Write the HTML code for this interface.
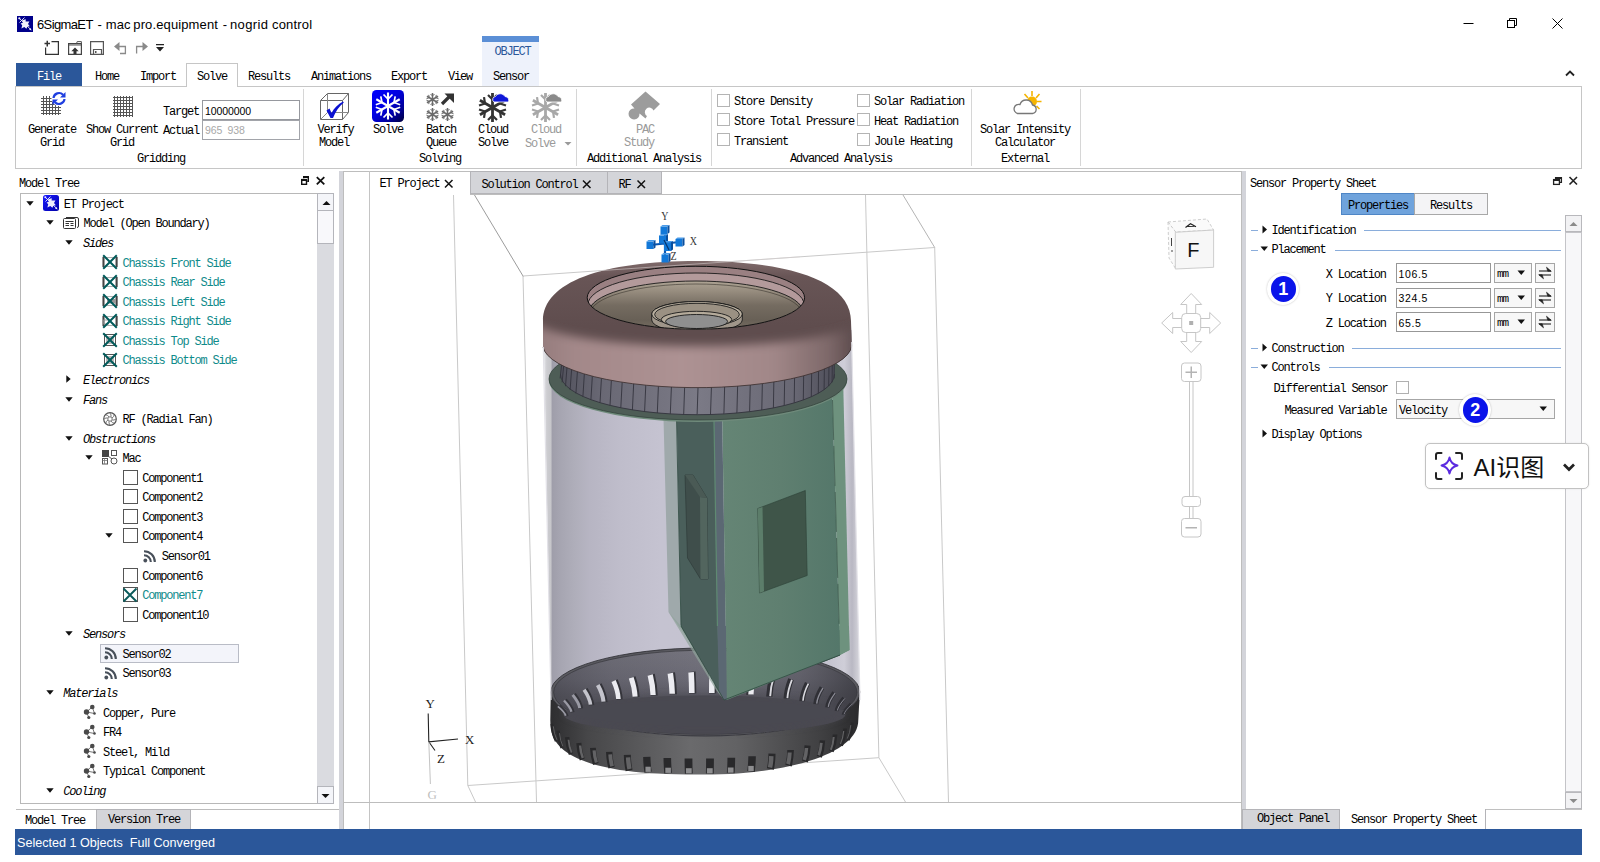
<!DOCTYPE html>
<html lang="en"><head><meta charset="utf-8"><title>6SigmaET - mac pro.equipment - nogrid control</title>
<style>
html,body{margin:0;padding:0;background:#fff;}
body{width:1600px;height:862px;overflow:hidden;position:relative;}
#app{position:absolute;left:0;top:0;width:1600px;height:862px;overflow:hidden;background:#fff;
 font-family:"Liberation Mono","Noto Sans CJK SC",monospace;font-size:12px;letter-spacing:-1.2px;color:#000;line-height:14px;white-space:nowrap;}
.a{position:absolute;}
.t{position:absolute;height:14px;line-height:14px;white-space:nowrap;margin-top:1.5px;}
.c{text-align:center;}
.r{text-align:right;}
.i{font-style:italic;}
.teal{color:#0f8b8b;}
.gr{color:#9a9a9a;}
.sans{font-family:"Liberation Sans","Noto Sans CJK SC",sans-serif;letter-spacing:0;margin-top:0;}
.box{position:absolute;box-sizing:border-box;}
svg{position:absolute;overflow:visible;}

</style></head>
<body>
<div id="app">
<!-- title bar -->
<svg class="a" style="left:17px;top:16px" width="16" height="16" viewBox="0 0 16 16"><rect width="16" height="16" fill="#00008b"/><path d="M5.200 4.300 L8.800 3.200 L8.600 5.600 L12.400 5.400 L11 8 L12.800 10.300 L10.400 10.600 L9.400 12.800 L7.300 10.900 L4.400 12.600 L5.200 9.200 L3.600 7.400 L5.800 6.800 Z" fill="#f2f2fa"/><path d="M2.500 2.500 L13.800 13.600" stroke="#f2f2fa" stroke-width="0.900"/><path d="M14.600 14.500 L12 13.600 L13.600 12 Z" fill="#f2f2fa"/><circle cx="2.300" cy="2.300" r="1.100" fill="#f2f2fa"/><path d="M2.500 6.500 L7.500 1.500" stroke="#f2f2fa" stroke-width="0.900"/></svg>
<div class="t sans" style="left:37px;top:15.700px;font-size:13px;height:18px;line-height:18px;letter-spacing:-0.620px;color:#000">6SigmaET</div>
<div class="t sans" style="left:97.600px;top:15.700px;font-size:13px;height:18px;line-height:18px;color:#000">-</div>
<div class="t sans" style="left:105.800px;top:15.700px;font-size:13px;height:18px;line-height:18px;letter-spacing:0.060px;color:#000">mac</div>
<div class="t sans" style="left:133.300px;top:15.700px;font-size:13px;height:18px;line-height:18px;letter-spacing:0.120px;color:#000">pro.equipment</div>
<div class="t sans" style="left:222.700px;top:15.700px;font-size:13px;height:18px;line-height:18px;color:#000">-</div>
<div class="t sans" style="left:230px;top:15.700px;font-size:13px;height:18px;line-height:18px;letter-spacing:0.350px;color:#000">nogrid</div>
<div class="t sans" style="left:272px;top:15.700px;font-size:13px;height:18px;line-height:18px;letter-spacing:0.180px;color:#000">control</div>
<!-- window buttons -->
<svg class="a" style="left:1455px;top:10px" width="130" height="28" viewBox="0 0 130 28"><g fill="none" stroke="#000" stroke-width="1"><path d="M8.5 13.5 H18.5"/><rect x="52.500" y="10.500" width="7" height="7"/><path d="M54.500 10.500 V8.500 H61.500 V15.500 H59.500"/><path d="M97.500 8.500 L107.500 18.500 M107.500 8.500 L97.500 18.500"/></g></svg>

<!-- quick access toolbar -->
<svg class="a" style="left:40px;top:38px" width="130" height="20" viewBox="0 0 130 20">
 <g fill="none" stroke="#333" stroke-width="1.200">
  <path d="M11.500 3.600 H18.400 V16.400 H5.600 V9.500"/><path d="M4.500 5.600 H10 M7.250 2.800 V8.400" stroke-width="1.500"/>
  <path d="M28.600 16.400 V5.600 H41.400 V16.400 Z" stroke="#444"/><path d="M28.600 7 H41.400 M36.500 5.600 L37.200 3.600 H41.400 V5.600" stroke="#555" stroke-width="1"/>
  <path d="M50.600 16.400 V3.600 H63.400 V16.400 Z M53.500 16.400 V11.500 H61.500 V16.400" stroke="#555"/>
 </g>
 <path d="M35 9.500 L38.700 13.200 H36.500 V16 H33.500 V13.200 H31.300 Z" fill="#333"/>
 <rect x="55" y="13" width="1.500" height="2" fill="#555"/>
 <g fill="none" stroke="#8a8a8a" stroke-width="1.300"><path d="M77 8.500 H85.400 V15.500 H80"/><path d="M96.600 15.500 V8.500 H104"/></g>
 <path d="M74 8.500 L79.500 4 V13 Z" fill="#8a8a8a"/><path d="M108 8.500 L102.500 4 V13 Z" fill="#8a8a8a"/>
 <path d="M116 6 H124 V7.300 H116 Z M116 9 H124 L120 13.500 Z" fill="#222"/>
</svg>
<!-- tabs -->
<div class="box" style="left:16px;top:63px;width:66px;height:23px;background:#2b579a"></div>
<div class="t" style="left:37px;top:68px;color:#fff">File</div>
<div class="box" style="left:482px;top:36px;width:57px;height:6px;background:#5b8fd6"></div>
<div class="box" style="left:482px;top:42px;width:57px;height:44px;background:#eef2fb"></div>
<div class="t" style="left:494.5px;top:43px;color:#2b579a">OBJECT</div>
<div class="t" style="left:95px;top:68px">Home</div>
<div class="t" style="left:140px;top:68px">Import</div>
<div class="t" style="left:248px;top:68px">Results</div>
<div class="t" style="left:311px;top:68px">Animations</div>
<div class="t" style="left:391px;top:68px">Export</div>
<div class="t" style="left:448px;top:68px">View</div>
<div class="t" style="left:493px;top:68px">Sensor</div>
<!-- ribbon body -->
<div class="box" style="left:15px;top:86px;width:1567px;height:83px;border:1px solid #c6c6c6;background:#fff"></div>
<div class="box" style="left:186px;top:63px;width:52px;height:24px;border:1px solid #c6c6c6;border-bottom:none;background:#fff"></div>
<div class="t" style="left:197px;top:68px">Solve</div>
<svg class="a" style="left:1564px;top:68px" width="12" height="10" viewBox="0 0 12 10"><path d="M2 7.500 L6 3.500 L10 7.500" fill="none" stroke="#222" stroke-width="1.800"/></svg>
<!-- separators -->
<div class="box" style="left:303px;top:89px;width:1px;height:77px;background:#d6d6d6"></div>
<div class="box" style="left:576px;top:89px;width:1px;height:77px;background:#d6d6d6"></div>
<div class="box" style="left:711px;top:89px;width:1px;height:77px;background:#d6d6d6"></div>
<div class="box" style="left:971px;top:89px;width:1px;height:77px;background:#d6d6d6"></div>
<div class="box" style="left:1080px;top:89px;width:1px;height:77px;background:#d6d6d6"></div>
<!-- group: Gridding -->
<svg class="a" style="left:40px;top:91px" width="28" height="26" viewBox="0 0 28 26">
 <g stroke="#555" stroke-width="1" fill="none"><path d="M1 7.500 H21 M1 10.500 H21 M1 13.500 H21 M1 16.500 H21 M1 19.500 H21 M1 22.500 H21 M3.500 5 V24 M6.500 5 V24 M9.500 5 V24 M12.500 5 V24 M15.500 5 V24 M18.500 5 V24"/></g>
 <circle cx="19" cy="7.500" r="7.500" fill="#fff"/>
 <g fill="none" stroke="#1f3fe0" stroke-width="2.200"><path d="M13.500 7 A5.500 5.500 0 0 1 23 3.800"/><path d="M24.500 8 A5.500 5.500 0 0 1 15 11.200"/></g>
 <path d="M25.500 1 V6.500 H20 Z M12.500 14 V8.500 H18 Z" fill="#1f3fe0"/>
</svg>
<div class="t c" style="left:22px;top:121px;width:60px">Generate</div>
<div class="t c" style="left:22px;top:134.5px;width:60px">Grid</div>
<svg class="a" style="left:112px;top:95px" width="22" height="22" viewBox="0 0 22 22"><g stroke="#555" stroke-width="1" fill="none"><path d="M1 2.500 H21 M1 5.500 H21 M1 8.500 H21 M1 11.500 H21 M1 14.500 H21 M1 17.500 H21 M1 20.500 H21 M2.500 1 V22 M5.500 1 V22 M8.500 1 V22 M11.500 1 V22 M14.500 1 V22 M17.500 1 V22 M20.500 1 V22"/></g></svg>
<div class="t c" style="left:82px;top:121px;width:80px">Show Current</div>
<div class="t c" style="left:82px;top:134.5px;width:80px">Grid</div>
<div class="t" style="left:163px;top:103px">Target</div>
<div class="t" style="left:163px;top:122.5px">Actual</div>
<div class="box" style="left:202px;top:100px;width:98px;height:20px;border:1px solid #96989e;background:#fff"></div>
<div class="box" style="left:202px;top:120px;width:98px;height:20px;border:1px solid #a2a4aa;background:#fff"></div>
<div class="t sans" style="left:205px;top:103.5px;font-size:10.500px;letter-spacing:-0.100px">10000000</div>
<div class="t sans" style="left:205px;top:123.3px;font-size:10.500px;letter-spacing:-0.100px;color:#a8a8a8;word-spacing:2.5px">965 938</div>
<div class="t c" style="left:121px;top:150.5px;width:80px">Gridding</div>
<!-- group: Solving -->
<svg class="a" style="left:318px;top:91px" width="32" height="30" viewBox="0 0 32 30">
 <g fill="none" stroke="#666" stroke-width="1"><path d="M2.500 9.500 H24.500 V28.500 H2.500 Z"/><path d="M2.500 9.500 L9.500 2.500 H30.500 L24.500 9.500 M30.500 2.500 V21.500 L24.500 28.500"/><path d="M9.500 2.500 V21.500 H30.500 M9.500 21.500 L2.500 28.500" stroke="#888"/></g>
 <path d="M8.500 19.500 L11.500 17.500 L13.500 22 C16 17 20 13.500 25 10.500 L25.800 11.500 C21 15.500 17.500 20.500 15 27 H12.500 Z" fill="#0a10d0"/>
</svg>
<div class="t c" style="left:305.5px;top:121px;width:60px">Verify</div>
<div class="t c" style="left:304px;top:134.5px;width:60px">Model</div>
<svg class="a" style="left:372px;top:90px" width="32" height="32" viewBox="0 0 32 32">
 <defs><linearGradient id="gsv" x1="0" y1="0" x2="1" y2="1"><stop offset="0" stop-color="#0000ff"/><stop offset="0.45" stop-color="#0000e0"/><stop offset="0.75" stop-color="#000098"/><stop offset="1" stop-color="#000038"/></linearGradient></defs>
 <rect x="0" y="0" width="32" height="32" rx="4.500" fill="url(#gsv)"/>
 <g stroke="#fff" stroke-width="2.100" fill="none" stroke-linecap="butt"><path d="M16 2.500 V29.500 M4.300 9.250 L27.700 22.750 M4.300 22.750 L27.700 9.250"/><path d="M11.500 4.500 L16 9 L20.500 4.500 M11.500 27.500 L16 23 L20.500 27.500 M3.800 14.800 L10 12.500 L8.800 6.300 M28.200 14.800 L22 12.500 L23.200 6.300 M3.800 17.200 L10 19.500 L8.800 25.700 M28.200 17.200 L22 19.500 L23.200 25.700" stroke-width="1.700"/></g>
</svg>
<div class="t c" style="left:358px;top:121px;width:60px">Solve</div>
<svg class="a" style="left:425px;top:92px" width="32" height="30" viewBox="0 0 32 30">
 <g stroke="#6a6a6a" stroke-width="1.500" fill="none"><path d="M7.500 1 V14 M1.900 4.250 L13.100 10.750 M1.900 10.750 L13.100 4.250"/><path d="M5.500 2 L7.500 4 L9.500 2 M5.500 13 L7.500 11 L9.500 13 M1.500 6.700 L4.300 5.700 L3.700 2.900 M13.500 6.700 L10.700 5.700 L11.300 2.900 M1.500 8.300 L4.300 9.300 L3.700 12.100 M13.500 8.300 L10.700 9.300 L11.300 12.100" stroke-width="1"/></g>
 <g transform="translate(0,15)"><g stroke="#6a6a6a" stroke-width="1.500" fill="none"><path d="M7.500 1 V14 M1.900 4.250 L13.100 10.750 M1.900 10.750 L13.100 4.250"/><path d="M5.500 2 L7.500 4 L9.500 2 M5.500 13 L7.500 11 L9.500 13 M1.500 6.700 L4.300 5.700 L3.700 2.900 M13.500 6.700 L10.700 5.700 L11.300 2.900 M1.500 8.300 L4.300 9.300 L3.700 12.100 M13.500 8.300 L10.700 9.300 L11.300 12.100" stroke-width="1"/></g></g><g transform="translate(15,15)"><g stroke="#6a6a6a" stroke-width="1.500" fill="none"><path d="M7.500 1 V14 M1.900 4.250 L13.100 10.750 M1.900 10.750 L13.100 4.250"/><path d="M5.500 2 L7.500 4 L9.500 2 M5.500 13 L7.500 11 L9.500 13 M1.500 6.700 L4.300 5.700 L3.700 2.900 M13.500 6.700 L10.700 5.700 L11.300 2.900 M1.500 8.300 L4.300 9.300 L3.700 12.100 M13.500 8.300 L10.700 9.300 L11.300 12.100" stroke-width="1"/></g></g>
 <path d="M17 12 L25.500 3.500" stroke="#333" stroke-width="3.200" fill="none"/><path d="M19.500 1.500 H29 V11 Z" fill="#333"/>
</svg>
<div class="t c" style="left:411px;top:121px;width:60px">Batch</div>
<div class="t c" style="left:411px;top:134.5px;width:60px">Queue</div>
<svg class="a" style="left:477px;top:90px" width="34" height="34" viewBox="0 0 34 34">
 <g id="sfb" stroke="#333" stroke-width="2.800" fill="none"><path d="M15.500 3 V32 M2.900 10.250 L28.100 24.750 M2.900 24.750 L28.100 10.250"/><path d="M11 5 L15.500 9.500 L20 5 M11 30 L15.500 25.500 L20 30 M2 15.500 L8 13.500 L7 7.200 M29 15.500 L23 13.500 L24 7.200 M2 19.500 L8 21.500 L7 27.800 M29 19.500 L23 21.500 L24 27.800" stroke-width="2.200"/></g>
 <path d="M17 12 H31.500 A4 4 0 0 0 28 6.500 A5.500 5.500 0 0 0 18.500 6.500 A3 3 0 0 0 17 12 Z" fill="#1018d8" stroke="#fff" stroke-width="0.800"/>
</svg>
<div class="t c" style="left:463px;top:121px;width:60px">Cloud</div>
<div class="t c" style="left:463px;top:134.5px;width:60px">Solve</div>
<svg class="a" style="left:530px;top:90px" width="34" height="34" viewBox="0 0 34 34">
 <g stroke="#a8a8a8" stroke-width="2.800" fill="none"><path d="M15.500 3 V32 M2.900 10.250 L28.100 24.750 M2.900 24.750 L28.100 10.250"/><path d="M11 5 L15.500 9.500 L20 5 M11 30 L15.500 25.500 L20 30 M2 15.500 L8 13.500 L7 7.200 M29 15.500 L23 13.500 L24 7.200 M2 19.500 L8 21.500 L7 27.800 M29 19.500 L23 21.500 L24 27.800" stroke-width="2.200"/></g>
 <path d="M17 12 H31.500 A4 4 0 0 0 28 6.500 A5.500 5.500 0 0 0 18.500 6.500 A3 3 0 0 0 17 12 Z" fill="#8a8a8a" stroke="#fff" stroke-width="0.800"/>
</svg>
<div class="t c gr" style="left:516px;top:121px;width:60px">Cloud</div>
<div class="t gr" style="left:525px;top:135px">Solve</div>
<svg class="a" style="left:564px;top:141px" width="8" height="6" viewBox="0 0 8 6"><path d="M0.500 1 H7.500 L4 4.500 Z" fill="#9a9a9a"/></svg>
<div class="t c" style="left:400px;top:150.5px;width:80px">Solving</div>
<!-- group: Additional Analysis -->
<svg class="a" style="left:628px;top:90px" width="34" height="32" viewBox="0 0 34 32">
 <path d="M17.500 1.500 L32 14 L25.500 20.500 A4.500 4.500 0 1 0 19 26 L17.500 28.500 L11.500 23.500 A5.500 5.500 0 1 1 6.500 18.500 L3 14.500 Z" fill="#9c9c9c"/>
</svg>
<div class="t c gr" style="left:615px;top:121px;width:60px">PAC</div>
<div class="t c gr" style="left:609px;top:134.5px;width:60px">Study</div>
<div class="t c" style="left:584px;top:150.5px;width:120px">Additional Analysis</div>
<!-- group: Advanced Analysis -->
<div class="box" style="left:717px;top:94px;width:13px;height:13px;border:1px solid #b4b4b4;background:#fff"></div>
<div class="box" style="left:717px;top:113px;width:13px;height:13px;border:1px solid #b4b4b4;background:#fff"></div>
<div class="box" style="left:717px;top:133px;width:13px;height:13px;border:1px solid #b4b4b4;background:#fff"></div>
<div class="box" style="left:857px;top:94px;width:13px;height:13px;border:1px solid #b4b4b4;background:#fff"></div>
<div class="box" style="left:857px;top:113px;width:13px;height:13px;border:1px solid #b4b4b4;background:#fff"></div>
<div class="box" style="left:857px;top:133px;width:13px;height:13px;border:1px solid #b4b4b4;background:#fff"></div>
<div class="t" style="left:734px;top:93.5px">Store Density</div>
<div class="t" style="left:734px;top:113px">Store Total Pressure</div>
<div class="t" style="left:734px;top:133px">Transient</div>
<div class="t" style="left:874px;top:93.5px">Solar Radiation</div>
<div class="t" style="left:874px;top:113px">Heat Radiation</div>
<div class="t" style="left:874px;top:133px">Joule Heating</div>
<div class="t c" style="left:781px;top:150.5px;width:120px">Advanced Analysis</div>
<!-- group: External -->
<svg class="a" style="left:1010px;top:90px" width="34" height="26" viewBox="0 0 34 26">
 <g stroke="#f5b400" stroke-width="1.600"><path d="M22 1 V6 M14.500 4 L18 8 M29.500 4 L26 8 M31.500 11.500 H27 M29.500 19 L26.500 16"/></g>
 <circle cx="22" cy="11.500" r="5" fill="#f5b400"/>
 <path d="M7.500 23.500 H22.500 A4.300 4.300 0 0 0 22.500 15 A6.500 6.500 0 0 0 10 14.500 A4.600 4.600 0 0 0 7.500 23.500 Z" fill="#fff" stroke="#777" stroke-width="1.300"/>
</svg>
<div class="t c" style="left:965px;top:121px;width:120px">Solar Intensity</div>
<div class="t c" style="left:965px;top:134.5px;width:120px">Calculator</div>
<div class="t c" style="left:985px;top:150.5px;width:80px">External</div>

<!-- model tree panel -->
<div class="t" style="left:19px;top:175px">Model Tree</div>
<svg class="a" style="left:299px;top:175px" width="30" height="12" viewBox="0 0 30 12"><g fill="none" stroke="#111" stroke-width="1.400"><path d="M4.700 3.300 V1.700 H9.300 V6.300 H8.200" /><path d="M4.700 2 H9.300" stroke-width="2"/><rect x="2.700" y="4.600" width="4.800" height="4.700" fill="#fff"/><path d="M2.700 5 H7.500" stroke-width="2"/><path d="M17.800 2.200 L25.300 9.300 M25.300 2.200 L17.800 9.300" stroke-width="1.800"/></g></svg>
<div class="box" style="left:20px;top:193px;width:314px;height:611px;border:1px solid #b8b8b8;background:#fff"></div>
<div class="box" style="left:317px;top:193px;width:17px;height:610px;background:#dadbe0"></div>
<div class="box" style="left:317px;top:193px;width:17px;height:18px;border:1px solid #b4b5bb;background:#f4f5f9"></div>
<div class="box" style="left:317px;top:210px;width:17px;height:34px;border:1px solid #b4b5bb;background:#f8f8fb"></div>
<div class="box" style="left:317px;top:786px;width:17px;height:18px;border:1px solid #b4b5bb;background:#f4f5f9"></div>
<svg class="a" style="left:321.5px;top:199.5px" width="9" height="6" viewBox="0 0 9 6"><path d="M0.500 5 H8.500 L4.500 1 Z" fill="#111"/></svg>
<svg class="a" style="left:321px;top:793px" width="9" height="6" viewBox="0 0 9 6"><path d="M0.500 1 H8.500 L4.500 5 Z" fill="#111"/></svg>
<svg class="a" style="left:26.2px;top:200.80px" width="8" height="5" viewBox="0 0 8 5"><path d="M0.300 0.300 H7.700 L4 4.700 Z" fill="#111"/></svg>
<svg class="a" style="left:43.2px;top:195.30px" width="16" height="16" viewBox="0 0 16 16"><defs><linearGradient id="gapp" x1="0" y1="0" x2="1" y2="1"><stop offset="0" stop-color="#1a1aff"/><stop offset="1" stop-color="#0000a8"/></linearGradient></defs><rect width="16" height="16" rx="2.500" fill="url(#gapp)"/><path d="M5.200 4.300 L8.800 3.200 L8.600 5.600 L12.400 5.400 L11 8 L12.800 10.300 L10.400 10.600 L9.400 12.800 L7.300 10.900 L4.400 12.600 L5.200 9.200 L3.600 7.400 L5.800 6.800 Z" fill="#eeeefc"/><path d="M2.500 2.500 L13.800 13.600" stroke="#eeeefc" stroke-width="0.900"/><path d="M14.600 14.500 L12 13.600 L13.600 12 Z" fill="#eeeefc"/><circle cx="2.300" cy="2.300" r="1" fill="#eeeefc"/><path d="M2.500 6.500 L7.500 1.500" stroke="#eeeefc" stroke-width="0.900"/></svg>
<div class="t " style="left:63.8px;top:196.30px">ET Project</div>
<svg class="a" style="left:45.8px;top:220.37px" width="8" height="5" viewBox="0 0 8 5"><path d="M0.300 0.300 H7.700 L4 4.700 Z" fill="#111"/></svg>
<svg class="a" style="left:63.0px;top:214.87px" width="17" height="16" viewBox="0 0 17 16"><g fill="none" stroke="#333" stroke-width="1"><rect x="0.500" y="3.500" width="12" height="10" rx="1"/><path d="M3 2.500 H14 Q15.500 2.500 15.500 4 V11 Q15.500 12.500 14 12.500" /><path d="M2.500 6.500 H10.500 M2.500 8.500 H6 M7.500 8.500 H10.500 M2.500 10.500 H6 M7.500 10.500 H10.500"/></g></svg>
<div class="t " style="left:83.4px;top:215.87px">Model (Open Boundary)</div>
<svg class="a" style="left:65.4px;top:239.94px" width="8" height="5" viewBox="0 0 8 5"><path d="M0.300 0.300 H7.700 L4 4.700 Z" fill="#111"/></svg>
<div class="t i" style="left:82.9px;top:235.44px">Sides</div>
<svg class="a" style="left:102.1px;top:254.01px" width="17" height="16" viewBox="0 0 17 16"><path d="M2.500 3.500 H13.500 V12.500 H2.500 Z" fill="#fff" stroke="#999" stroke-width="0.800"/><path d="M1.300 3 V13 M14.800 3 V13" stroke="#444" stroke-width="1.700"/><path d="M1.200 1.200 L14.800 14.800 M14.800 1.200 L1.200 14.800" stroke="#005a5a" stroke-width="2"/></svg>
<div class="t teal" style="left:122.6px;top:255.01px">Chassis Front Side</div>
<svg class="a" style="left:102.1px;top:273.58px" width="17" height="16" viewBox="0 0 17 16"><path d="M2.500 3.500 H13.500 V12.500 H2.500 Z" fill="#fff" stroke="#999" stroke-width="0.800"/><path d="M1.300 3 V13 M14.800 3 V13" stroke="#444" stroke-width="1.700"/><path d="M1.200 1.200 L14.800 14.800 M14.800 1.200 L1.200 14.800" stroke="#005a5a" stroke-width="2"/></svg>
<div class="t teal" style="left:122.6px;top:274.58px">Chassis Rear Side</div>
<svg class="a" style="left:102.1px;top:293.15px" width="17" height="16" viewBox="0 0 17 16"><path d="M2.500 3.500 H13.500 V12.500 H2.500 Z" fill="#fff" stroke="#999" stroke-width="0.800"/><path d="M1.300 3 V13 M14.800 3 V13" stroke="#444" stroke-width="1.700"/><rect x="5" y="6" width="9" height="4.500" fill="#9a9a9a"/><path d="M1.200 1.200 L14.800 14.800 M14.800 1.200 L1.200 14.800" stroke="#005a5a" stroke-width="2"/></svg>
<div class="t teal" style="left:122.6px;top:294.15px">Chassis Left Side</div>
<svg class="a" style="left:102.1px;top:312.72px" width="17" height="16" viewBox="0 0 17 16"><path d="M2.500 3.500 H13.500 V12.500 H2.500 Z" fill="#fff" stroke="#999" stroke-width="0.800"/><path d="M1.300 3 V13 M14.800 3 V13" stroke="#444" stroke-width="1.700"/><rect x="1.500" y="7" width="5" height="4" fill="none" stroke="#888" stroke-width="0.800"/><path d="M1.200 1.200 L14.800 14.800 M14.800 1.200 L1.200 14.800" stroke="#005a5a" stroke-width="2"/></svg>
<div class="t teal" style="left:122.6px;top:313.72px">Chassis Right Side</div>
<svg class="a" style="left:102.1px;top:332.29px" width="17" height="16" viewBox="0 0 17 16"><path d="M2.500 2.500 H13.500 V13.500 H2.500 Z" fill="#fff" stroke="#555" stroke-width="1"/><rect x="4" y="4" width="8" height="8" fill="#b8b8b8"/><path d="M1.200 1.200 L14.800 14.800 M14.800 1.200 L1.200 14.800" stroke="#005a5a" stroke-width="2"/></svg>
<div class="t teal" style="left:122.6px;top:333.29px">Chassis Top Side</div>
<svg class="a" style="left:102.1px;top:351.86px" width="17" height="16" viewBox="0 0 17 16"><path d="M2.500 2.500 H13.500 V13.500 H2.500 Z" fill="#fff" stroke="#555" stroke-width="1"/><rect x="4" y="4" width="8" height="8" fill="#b8b8b8"/><path d="M1.200 1.200 L14.800 14.800 M14.800 1.200 L1.200 14.800" stroke="#005a5a" stroke-width="2"/></svg>
<div class="t teal" style="left:122.6px;top:352.86px">Chassis Bottom Side</div>
<svg class="a" style="left:66.4px;top:375.43px" width="5" height="8" viewBox="0 0 5 8"><path d="M0.300 0.300 V7.700 L4.700 4 Z" fill="#111"/></svg>
<div class="t i" style="left:82.9px;top:372.43px">Electronics</div>
<svg class="a" style="left:65.4px;top:396.50px" width="8" height="5" viewBox="0 0 8 5"><path d="M0.300 0.300 H7.700 L4 4.700 Z" fill="#111"/></svg>
<div class="t i" style="left:82.9px;top:392.00px">Fans</div>
<svg class="a" style="left:101.6px;top:410.57px" width="16" height="16" viewBox="0 0 16 16"><circle cx="8" cy="8" r="6.300" fill="none" stroke="#555" stroke-width="1.200"/><circle cx="8" cy="8" r="2.200" fill="none" stroke="#777" stroke-width="1"/><g stroke="#777" stroke-width="1" fill="none"><path d="M8 2 Q9.500 4 9 5.800 M14 8 Q12 9.500 10.200 9 M8 14 Q6.500 12 7 10.200 M2 8 Q4 6.500 5.800 7 M12.200 3.800 Q12 6 10 7 M12.200 12.200 Q10 12 9 10 M3.800 12.200 Q4 10 6 9 M3.800 3.800 Q6 4 7 6"/></g></svg>
<div class="t " style="left:122.6px;top:411.57px">RF (Radial Fan)</div>
<svg class="a" style="left:65.4px;top:435.64px" width="8" height="5" viewBox="0 0 8 5"><path d="M0.300 0.300 H7.700 L4 4.700 Z" fill="#111"/></svg>
<div class="t i" style="left:82.9px;top:431.14px">Obstructions</div>
<svg class="a" style="left:85.0px;top:455.21px" width="8" height="5" viewBox="0 0 8 5"><path d="M0.300 0.300 H7.700 L4 4.700 Z" fill="#111"/></svg>
<svg class="a" style="left:101.3px;top:448.71px" width="17" height="16" viewBox="0 0 17 16"><rect x="1" y="1" width="7" height="7" fill="#444"/><rect x="10.500" y="1.500" width="5" height="5" fill="#fff" stroke="#555"/><rect x="1.500" y="9.500" width="5" height="5.500" fill="#fff" stroke="#555"/><path d="M3.500 9.500 V15 M1.500 11.500 H6.500" stroke="#777" stroke-width="0.800"/><circle cx="13" cy="12" r="3" fill="#fff" stroke="#555"/><path d="M7 7 L11 10" stroke="#555"/></svg>
<div class="t " style="left:122.6px;top:450.71px">Mac</div>
<div class="box" style="left:122.9px;top:469.78px;width:15px;height:15px;border:1px solid #555;background:#fff"></div>
<div class="t " style="left:142.2px;top:470.28px">Component1</div>
<div class="box" style="left:122.9px;top:489.35px;width:15px;height:15px;border:1px solid #555;background:#fff"></div>
<div class="t " style="left:142.2px;top:489.85px">Component2</div>
<div class="box" style="left:122.9px;top:508.92px;width:15px;height:15px;border:1px solid #555;background:#fff"></div>
<div class="t " style="left:142.2px;top:509.42px">Component3</div>
<svg class="a" style="left:104.60000000000001px;top:533.49px" width="8" height="5" viewBox="0 0 8 5"><path d="M0.300 0.300 H7.700 L4 4.700 Z" fill="#111"/></svg>
<div class="box" style="left:122.9px;top:528.49px;width:15px;height:15px;border:1px solid #555;background:#fff"></div>
<div class="t " style="left:142.2px;top:528.99px">Component4</div>
<svg class="a" style="left:142.2px;top:547.56px" width="16" height="16" viewBox="0 0 16 16"><circle cx="3.300" cy="12.500" r="1.900" fill="#48505a"/><g fill="none" stroke="#48505a" stroke-width="2.100"><path d="M2 7.200 A6.800 6.800 0 0 1 8.800 14"/><path d="M2 3.200 A10.800 10.800 0 0 1 12.800 14"/></g></svg>
<div class="t " style="left:161.8px;top:548.56px">Sensor01</div>
<div class="box" style="left:122.9px;top:567.63px;width:15px;height:15px;border:1px solid #555;background:#fff"></div>
<div class="t " style="left:142.2px;top:568.13px">Component6</div>
<div class="box" style="left:122.9px;top:587.20px;width:15px;height:15px;border:1px solid #555;background:#fff"></div><svg class="a" style="left:122.4px;top:586.70px" width="16" height="16" viewBox="0 0 16 16"><path d="M1.500 1.500 L14.500 14.500 M14.500 1.500 L1.500 14.500" stroke="#0b5a5a" stroke-width="1.900"/></svg>
<div class="t teal" style="left:142.2px;top:587.70px">Component7</div>
<div class="box" style="left:122.9px;top:606.77px;width:15px;height:15px;border:1px solid #555;background:#fff"></div>
<div class="t " style="left:142.2px;top:607.27px">Component10</div>
<svg class="a" style="left:65.4px;top:631.34px" width="8" height="5" viewBox="0 0 8 5"><path d="M0.300 0.300 H7.700 L4 4.700 Z" fill="#111"/></svg>
<div class="t i" style="left:82.9px;top:626.84px">Sensors</div>
<div class="box" style="left:99.6px;top:643.91px;width:139px;height:19px;border:1px solid #b9bcc6;background:#f3f4fa"></div>
<svg class="a" style="left:102.6px;top:645.41px" width="16" height="16" viewBox="0 0 16 16"><circle cx="3.300" cy="12.500" r="1.900" fill="#48505a"/><g fill="none" stroke="#48505a" stroke-width="2.100"><path d="M2 7.200 A6.800 6.800 0 0 1 8.800 14"/><path d="M2 3.200 A10.800 10.800 0 0 1 12.800 14"/></g></svg>
<div class="t " style="left:122.6px;top:646.41px">Sensor02</div>
<svg class="a" style="left:102.6px;top:664.98px" width="16" height="16" viewBox="0 0 16 16"><circle cx="3.300" cy="12.500" r="1.900" fill="#48505a"/><g fill="none" stroke="#48505a" stroke-width="2.100"><path d="M2 7.200 A6.800 6.800 0 0 1 8.800 14"/><path d="M2 3.200 A10.800 10.800 0 0 1 12.800 14"/></g></svg>
<div class="t " style="left:122.6px;top:665.98px">Sensor03</div>
<svg class="a" style="left:45.8px;top:690.05px" width="8" height="5" viewBox="0 0 8 5"><path d="M0.300 0.300 H7.700 L4 4.700 Z" fill="#111"/></svg>
<div class="t i" style="left:63.3px;top:685.55px">Materials</div>
<svg class="a" style="left:82.7px;top:704.12px" width="16" height="16" viewBox="0 0 16 16"><g stroke="#777" stroke-width="1"><path d="M3.500 8 L9.300 3 M3.500 8 L11.500 9.500 M3.500 8 L5.800 13.500 M9.300 3 L11.500 9.500"/></g><circle cx="3.500" cy="8" r="2.700" fill="#4a4a4a"/><circle cx="9.300" cy="3" r="2.300" fill="#4a4a4a"/><circle cx="11.500" cy="9.500" r="1.300" fill="#4a4a4a"/><circle cx="5.800" cy="13.500" r="1.600" fill="#4a4a4a"/></svg>
<div class="t " style="left:103.0px;top:705.12px">Copper, Pure</div>
<svg class="a" style="left:82.7px;top:723.69px" width="16" height="16" viewBox="0 0 16 16"><g stroke="#777" stroke-width="1"><path d="M3.500 8 L9.300 3 M3.500 8 L11.500 9.500 M3.500 8 L5.800 13.500 M9.300 3 L11.500 9.500"/></g><circle cx="3.500" cy="8" r="2.700" fill="#4a4a4a"/><circle cx="9.300" cy="3" r="2.300" fill="#4a4a4a"/><circle cx="11.500" cy="9.500" r="1.300" fill="#4a4a4a"/><circle cx="5.800" cy="13.500" r="1.600" fill="#4a4a4a"/></svg>
<div class="t " style="left:103.0px;top:724.69px">FR4</div>
<svg class="a" style="left:82.7px;top:743.26px" width="16" height="16" viewBox="0 0 16 16"><g stroke="#777" stroke-width="1"><path d="M3.500 8 L9.300 3 M3.500 8 L11.500 9.500 M3.500 8 L5.800 13.500 M9.300 3 L11.500 9.500"/></g><circle cx="3.500" cy="8" r="2.700" fill="#4a4a4a"/><circle cx="9.300" cy="3" r="2.300" fill="#4a4a4a"/><circle cx="11.500" cy="9.500" r="1.300" fill="#4a4a4a"/><circle cx="5.800" cy="13.500" r="1.600" fill="#4a4a4a"/></svg>
<div class="t " style="left:103.0px;top:744.26px">Steel, Mild</div>
<svg class="a" style="left:82.7px;top:762.83px" width="16" height="16" viewBox="0 0 16 16"><g stroke="#777" stroke-width="1"><path d="M3.500 8 L9.300 3 M3.500 8 L11.500 9.500 M3.500 8 L5.800 13.500 M9.300 3 L11.500 9.500"/></g><circle cx="3.500" cy="8" r="2.700" fill="#4a4a4a"/><circle cx="9.300" cy="3" r="2.300" fill="#4a4a4a"/><circle cx="11.500" cy="9.500" r="1.300" fill="#4a4a4a"/><circle cx="5.800" cy="13.500" r="1.600" fill="#4a4a4a"/></svg>
<div class="t " style="left:103.0px;top:763.83px">Typical Component</div>
<svg class="a" style="left:45.8px;top:787.90px" width="8" height="5" viewBox="0 0 8 5"><path d="M0.300 0.300 H7.700 L4 4.700 Z" fill="#111"/></svg>
<div class="t i" style="left:63.3px;top:783.40px">Cooling</div>
<div class="box" style="left:16px;top:809px;width:323px;height:1px;background:#bcbcbc"></div>
<div class="box" style="left:96px;top:809px;width:95px;height:20px;border:1px solid #b4b4b8;border-bottom:none;background:#d4d5d9"></div>
<div class="box" style="left:16px;top:810px;width:80px;height:19px;background:#fff"></div>
<div class="t" style="left:25px;top:812px">Model Tree</div>
<div class="t" style="left:108px;top:811px">Version Tree</div>
<div class="box" style="left:339px;top:171px;width:4.3px;height:658px;background:#d3d4da"></div>

<!-- document area -->
<div class="box" style="left:343px;top:171px;width:899px;height:658px;border:1px solid #bdbdbd;border-bottom:none;background:#fff"></div>
<div class="box" style="left:369px;top:171px;width:1px;height:658px;background:#c4c4c4"></div>
<div class="box" style="left:344px;top:802px;width:898px;height:1px;background:#bdbdbd"></div>
<div class="box" style="left:470px;top:171px;width:138px;height:23px;border:1px solid #b4b4b8;background:#d4d5d9"></div>
<div class="box" style="left:607px;top:171px;width:55px;height:23px;border:1px solid #b4b4b8;background:#d4d5d9"></div>
<div class="box" style="left:470px;top:194px;width:772px;height:1px;background:#bdbdbd"></div>
<div class="t" style="left:379.500px;top:175.500px">ET Project</div>
<div class="t" style="left:481.500px;top:176px">Solution Control</div>
<div class="t" style="left:618.500px;top:176px">RF</div>
<svg class="a" style="left:440px;top:178px" width="220" height="12" viewBox="0 0 220 12"><g fill="none" stroke="#111" stroke-width="1.500"><path d="M5 2 L12.500 9.500 M12.500 2 L5 9.500"/><path d="M143 2.500 L150.500 10 M150.500 2.500 L143 10"/><path d="M197.500 2.500 L205 10 M205 2.500 L197.500 10"/></g></svg>
<svg class="a" style="left:370px;top:195px" width="871" height="607" viewBox="370 195 871 607">
<defs>
<clipPath id="vp"><rect x="370" y="195" width="871" height="607"/></clipPath>
<linearGradient id="gGlass" gradientUnits="userSpaceOnUse" x1="543" y1="0" x2="860" y2="0">
 <stop offset="0" stop-color="#ececf0"/><stop offset="0.012" stop-color="#cdcdd1"/><stop offset="0.025" stop-color="#c6c6ca"/><stop offset="0.029" stop-color="#9f9eaa"/><stop offset="0.054" stop-color="#a6a5b1"/><stop offset="0.1" stop-color="#afaeba"/><stop offset="0.148" stop-color="#b7b5c3"/><stop offset="0.243" stop-color="#bfbdcb"/><stop offset="0.37" stop-color="#c5c3d1"/><stop offset="0.9" stop-color="#c4c3cf"/><stop offset="0.95" stop-color="#cfced8"/><stop offset="0.975" stop-color="#b9b8c3"/><stop offset="1" stop-color="#d8d8de"/>
</linearGradient>
<linearGradient id="gPinkTop" gradientUnits="userSpaceOnUse" x1="0" y1="261" x2="0" y2="390">
 <stop offset="0" stop-color="#806b6b"/><stop offset="0.12" stop-color="#685556"/><stop offset="0.5" stop-color="#5f4d4e"/><stop offset="1" stop-color="#5f4d4e"/>
</linearGradient>
<linearGradient id="gPinkBand" gradientUnits="userSpaceOnUse" x1="543" y1="0" x2="851" y2="0">
 <stop offset="0" stop-color="#967d7e"/><stop offset="0.1" stop-color="#a38889"/><stop offset="0.45" stop-color="#ad9293"/><stop offset="0.75" stop-color="#a18788"/><stop offset="0.93" stop-color="#7d6869"/><stop offset="1" stop-color="#5f4e4f"/>
</linearGradient>
<linearGradient id="gBeige" gradientUnits="userSpaceOnUse" x1="0" y1="280" x2="0" y2="330">
 <stop offset="0" stop-color="#b0a696"/><stop offset="0.22" stop-color="#978d7f"/><stop offset="0.5" stop-color="#756c61"/><stop offset="0.8" stop-color="#686056"/><stop offset="1" stop-color="#766d62"/>
</linearGradient>
<linearGradient id="gTeeth" gradientUnits="userSpaceOnUse" x1="560" y1="0" x2="835" y2="0">
 <stop offset="0" stop-color="#52525d"/><stop offset="0.15" stop-color="#696874"/><stop offset="0.5" stop-color="#7b7a86"/><stop offset="0.85" stop-color="#696874"/><stop offset="1" stop-color="#4e4e59"/>
</linearGradient>
<linearGradient id="gPcb2" gradientUnits="userSpaceOnUse" x1="722" y1="0" x2="840" y2="0">
 <stop offset="0" stop-color="#658575"/><stop offset="0.5" stop-color="#5f7f70"/><stop offset="1" stop-color="#54776a"/>
</linearGradient>
<linearGradient id="gRingOut" gradientUnits="userSpaceOnUse" x1="551" y1="0" x2="860" y2="0">
 <stop offset="0" stop-color="#2e2e30"/><stop offset="0.12" stop-color="#474749"/><stop offset="0.45" stop-color="#6a6a6c"/><stop offset="0.6" stop-color="#626264"/><stop offset="0.88" stop-color="#3f3f41"/><stop offset="1" stop-color="#2a2a2c"/>
</linearGradient>
<linearGradient id="gBowl" gradientUnits="userSpaceOnUse" x1="0" y1="648" x2="0" y2="736">
 <stop offset="0" stop-color="#76757f"/><stop offset="0.35" stop-color="#6b6a75"/><stop offset="0.55" stop-color="#5c5b65"/><stop offset="1" stop-color="#4c4b53"/>
</linearGradient>
<linearGradient id="gBowlH" gradientUnits="userSpaceOnUse" x1="551" y1="0" x2="860" y2="0">
 <stop offset="0" stop-color="#303036" stop-opacity="0.4"/><stop offset="0.2" stop-color="#404046" stop-opacity="0.15"/><stop offset="0.5" stop-color="#404046" stop-opacity="0"/><stop offset="0.8" stop-color="#404046" stop-opacity="0.25"/><stop offset="1" stop-color="#303036" stop-opacity="0.7"/>
</linearGradient>
<filter id="bl3" x="-5%" y="-20%" width="110%" height="140%"><feGaussianBlur stdDeviation="3"/></filter>
<filter id="bl6" x="-5%" y="-30%" width="110%" height="160%"><feGaussianBlur stdDeviation="5"/></filter>
</defs>
<g clip-path="url(#vp)">
<g fill="none" stroke="#c9c9c9" stroke-width="1">
<path d="M453.500 195 L467.800 785.500 L476 803"/>
<path d="M523 276 L536.500 802"/>
<path d="M474.500 195 L523.300 276.500" stroke="#9c9c9c"/>
<path d="M523 276 L934.700 247.500 L948.500 802"/>
<path d="M903 195 L934.700 247.500" stroke="#b4b4b4"/>
<path d="M865.500 195 L878.900 757.700"/>
<path d="M467.800 785.500 L878.900 757.700 L905.500 802"/>
</g>
<path d="M543.500 330 L551 700 A154.500 49 0 0 0 860 700 L851.500 330 Z" fill="url(#gGlass)"/>
<path d="M663.500 418 L676.500 420 L681 626 L724 700 L724 690 L668.500 612 Z" fill="#9fa9ab"/>
<path d="M676.500 408 L714 408 L719 690 L724 700 L681 626 Z" fill="#4a5f5b"/>
<path d="M713.500 408 L722 408 L727 700 L724 700 L717.500 640 Z" fill="#5b6873"/>
<path d="M713.800 408 L718.500 690" stroke="#5f8a72" stroke-width="1.200" fill="none"/>
<path d="M722 400 L832 385 L840 655 L726.800 700 Z" fill="url(#gPcb2)"/>
<path d="M832 385 L843.200 383 L849.500 650 L840 655 Z" fill="#6e927e"/>
<path d="M832.500 400 L840 655" stroke="#3d5a4c" stroke-width="0.800" fill="none" stroke-dasharray="40 6"/>
<path d="M685 475 L693 475 L707 498 L708 579 L700.500 579 L687.500 558 Z" fill="#3f4e4b" stroke="#2b3835" stroke-width="0.600"/>
<path d="M700 497 L707 498 L708 579 L700.500 579 Z" fill="#52655e"/>
<path d="M685 475 L693 475 L707 498 L700 497 Z" fill="#4a5a55"/>
<path d="M757.800 508.500 L805.300 490.500 L807.200 575.500 L759.500 593 Z" fill="#3f5549" stroke="#2c3f36" stroke-width="0.600"/>
<path d="M757.800 508.500 L762.500 507 L764 591.300 L759.500 593 Z" fill="#5c7d6a"/>
<path d="M676.500 420 L681 626 L724 700 L840 655" stroke="#2f4a40" stroke-width="0.800" fill="none"/>
<path d="M550.3 720.0 L550.5 725.6 L550.9 729.6 L551.7 733.1 L552.9 736.3 L554.3 739.3 L556.1 742.1 L558.2 744.7 L560.6 747.3 L563.3 749.7 L566.3 752.0 L569.6 754.2 L573.3 756.2 L577.2 758.2 L581.5 760.0 L586.0 761.7 L590.9 763.4 L596.1 764.9 L601.5 766.3 L607.3 767.6 L613.4 768.8 L619.8 769.9 L626.6 770.8 L633.7 771.7 L641.1 772.4 L649.0 773.1 L657.4 773.6 L666.3 774.0 L676.1 774.3 L687.2 774.4 L703.0 774.5 L712.4 774.4 L721.1 774.2 L729.5 773.9 L737.8 773.4 L745.9 772.7 L753.8 772.0 L761.4 771.0 L768.9 770.0 L776.2 768.8 L783.3 767.5 L790.1 766.1 L796.6 764.5 L802.9 762.9 L808.9 761.1 L814.6 759.2 L820.1 757.2 L825.1 755.1 L829.9 752.9 L834.3 750.6 L838.4 748.2 L842.1 745.7 L845.5 743.1 L848.5 740.5 L851.1 737.8 L853.3 735.0 L855.1 732.2 L856.5 729.3 L857.5 726.3 L858.1 723.3 L858.3 720.0 L859.8 692 A154.5 44 0 0 1 550.8 692 Z" fill="url(#gRingOut)"/>
<path d="M688.5 758.5 Q688.5 766.1 688.8 773.7" stroke="#29292b" stroke-width="7.8" fill="none"/>
<path d="M688.8 768.2 L688.8 773.4" stroke="#8e8e90" stroke-width="5.8" fill="none"/>
<path d="M667.3 758.0 Q667.4 765.9 668.1 773.2" stroke="#29292b" stroke-width="7.6" fill="none"/>
<path d="M668.1 767.7 L668.1 772.9" stroke="#8e8e90" stroke-width="5.6" fill="none"/>
<path d="M646.8 756.9 Q646.9 764.9 648.1 772.2" stroke="#29292b" stroke-width="7.3" fill="none"/>
<path d="M648.1 766.7 L648.1 771.9" stroke="#8e8e90" stroke-width="5.3" fill="none"/>
<path d="M627.3 754.9 Q627.5 763.1 629.1 770.4" stroke="#29292b" stroke-width="7.0" fill="none"/>
<path d="M628.1 757.4 Q628.3 763.6 629.5 768.9" stroke="#636365" stroke-width="4.4" fill="none"/>
<path d="M609.2 751.9 Q609.5 760.4 611.6 767.7" stroke="#29292b" stroke-width="6.4" fill="none"/>
<path d="M610.2 754.4 Q610.5 760.9 612.1 766.2" stroke="#636365" stroke-width="3.8" fill="none"/>
<path d="M592.9 747.9 Q593.3 756.7 595.8 764.0" stroke="#29292b" stroke-width="5.8" fill="none"/>
<path d="M594.1 750.4 Q594.5 757.2 596.4 762.5" stroke="#636365" stroke-width="3.2" fill="none"/>
<path d="M578.8 743.0 Q579.3 752.0 582.2 759.5" stroke="#29292b" stroke-width="5.1" fill="none"/>
<path d="M580.1 745.5 Q580.6 752.5 582.8 758.0" stroke="#636365" stroke-width="2.5" fill="none"/>
<path d="M567.1 737.2 Q567.7 746.5 570.9 754.1" stroke="#29292b" stroke-width="4.4" fill="none"/>
<path d="M568.5 739.7 Q569.1 747.0 571.6 752.6" stroke="#636365" stroke-width="1.8" fill="none"/>
<path d="M558.0 730.7 Q558.7 740.2 562.1 747.9" stroke="#29292b" stroke-width="3.5" fill="none"/>
<path d="M559.5 733.2 Q560.2 740.7 562.9 746.4" stroke="#636365" stroke-width="0.9" fill="none"/>
<path d="M551.8 723.8 Q552.5 733.6 556.1 741.3" stroke="#29292b" stroke-width="2.6" fill="none"/>
<path d="M553.3 726.3 Q554.0 734.1 556.9 739.8" stroke="#636365" stroke-width="0.9" fill="none"/>
<path d="M710.0 758.5 Q710.0 766.1 709.8 773.7" stroke="#29292b" stroke-width="7.8" fill="none"/>
<path d="M709.8 768.2 L709.8 773.4" stroke="#8e8e90" stroke-width="5.8" fill="none"/>
<path d="M731.3 757.8 Q731.3 765.6 730.7 773.0" stroke="#29292b" stroke-width="7.7" fill="none"/>
<path d="M730.7 767.5 L730.7 772.7" stroke="#8e8e90" stroke-width="5.7" fill="none"/>
<path d="M752.1 756.2 Q752.0 764.1 751.0 771.4" stroke="#29292b" stroke-width="7.5" fill="none"/>
<path d="M751.0 765.9 L751.0 771.1" stroke="#8e8e90" stroke-width="5.5" fill="none"/>
<path d="M772.0 753.6 Q771.9 761.7 770.4 769.0" stroke="#29292b" stroke-width="7.1" fill="none"/>
<path d="M771.3 756.1 Q771.2 762.2 770.0 767.5" stroke="#636365" stroke-width="4.5" fill="none"/>
<path d="M790.6 750.0 Q790.4 758.4 788.5 765.6" stroke="#29292b" stroke-width="6.6" fill="none"/>
<path d="M789.7 752.5 Q789.5 758.9 788.0 764.1" stroke="#636365" stroke-width="4.0" fill="none"/>
<path d="M807.6 745.5 Q807.2 754.2 804.9 761.5" stroke="#29292b" stroke-width="6.1" fill="none"/>
<path d="M806.5 748.0 Q806.2 754.7 804.3 760.0" stroke="#636365" stroke-width="3.5" fill="none"/>
<path d="M822.5 740.3 Q822.1 749.3 819.3 756.7" stroke="#29292b" stroke-width="5.4" fill="none"/>
<path d="M821.3 742.8 Q820.8 749.8 818.7 755.2" stroke="#636365" stroke-width="2.8" fill="none"/>
<path d="M835.1 734.5 Q834.6 743.8 831.5 751.3" stroke="#29292b" stroke-width="4.6" fill="none"/>
<path d="M833.7 737.0 Q833.2 744.3 830.8 749.8" stroke="#636365" stroke-width="2.0" fill="none"/>
<path d="M845.1 728.5 Q844.5 737.9 841.1 745.6" stroke="#29292b" stroke-width="3.8" fill="none"/>
<path d="M843.7 731.0 Q843.0 738.4 840.4 744.1" stroke="#636365" stroke-width="1.2" fill="none"/>
<path d="M852.4 722.6 Q851.7 732.3 848.1 740.1" stroke="#29292b" stroke-width="3.0" fill="none"/>
<path d="M850.8 725.1 Q850.1 732.8 847.3 738.6" stroke="#636365" stroke-width="0.9" fill="none"/>
<ellipse cx="705.3" cy="692" rx="154.5" ry="44" fill="#5a5a60" stroke="#2a2a2e" stroke-width="0.800"/>
<ellipse cx="705.3" cy="692.3" rx="151.7" ry="42" fill="url(#gBowl)" stroke="#2e2e32" stroke-width="0.600"/>
<ellipse cx="705.3" cy="692.3" rx="151.7" ry="42" fill="url(#gBowlH)"/>
<ellipse cx="704.500" cy="714.500" rx="141" ry="19" fill="#4a4951"/>
<ellipse cx="704.500" cy="713" rx="141" ry="19" fill="#4a4951" filter="url(#bl3)" opacity="0.6"/>
<path d="M692.1 671.7 Q692.8 682.8 692.8 693.6" stroke="#34343a" stroke-width="7.0" fill="none"/>
<path d="M691.1 672.2 Q691.8 682.8 691.8 693.1" stroke="#ececf1" stroke-width="5.6" fill="none"/>
<path d="M671.6 672.7 Q673.3 683.8 673.5 694.3" stroke="#34343a" stroke-width="6.9" fill="none"/>
<path d="M670.3 673.2 Q672.0 683.8 672.2 693.8" stroke="#ececf1" stroke-width="5.5" fill="none"/>
<path d="M651.5 674.5 Q654.1 685.6 654.4 695.5" stroke="#34343a" stroke-width="6.7" fill="none"/>
<path d="M650.2 675.0 Q652.8 685.6 653.1 695.0" stroke="#ececf1" stroke-width="5.3" fill="none"/>
<path d="M632.5 677.2 Q636.0 687.9 636.4 697.2" stroke="#34343a" stroke-width="6.4" fill="none"/>
<path d="M631.2 677.7 Q634.7 687.9 635.1 696.7" stroke="#ececf1" stroke-width="5.0" fill="none"/>
<path d="M614.9 680.5 Q619.3 690.9 619.7 699.5" stroke="#34343a" stroke-width="6.0" fill="none"/>
<path d="M613.6 681.0 Q618.0 690.9 618.4 699.0" stroke="#ececf1" stroke-width="4.6" fill="none"/>
<path d="M599.1 684.6 Q604.2 694.4 604.8 702.1" stroke="#34343a" stroke-width="5.5" fill="none"/>
<path d="M597.8 685.1 Q602.9 694.4 603.5 701.6" stroke="#c4c4cc" stroke-width="4.1" fill="none"/>
<path d="M585.4 689.3 Q591.2 698.4 591.8 705.2" stroke="#34343a" stroke-width="5.0" fill="none"/>
<path d="M584.1 689.8 Q589.9 698.4 590.5 704.7" stroke="#c4c4cc" stroke-width="3.6" fill="none"/>
<path d="M574.0 694.4 Q580.3 702.8 581.0 708.6" stroke="#34343a" stroke-width="4.4" fill="none"/>
<path d="M572.7 694.9 Q579.0 702.8 579.7 708.1" stroke="#9a9aa4" stroke-width="3.0" fill="none"/>
<path d="M565.3 700.0 Q572.0 707.6 572.7 712.3" stroke="#34343a" stroke-width="3.8" fill="none"/>
<path d="M564.0 700.5 Q570.7 707.6 571.4 711.8" stroke="#9a9aa4" stroke-width="2.4" fill="none"/>
<path d="M559.2 705.9 Q566.3 712.5 567.0 716.2" stroke="#34343a" stroke-width="3.1" fill="none"/>
<path d="M557.9 706.4 Q565.0 712.5 565.7 715.7" stroke="#9a9aa4" stroke-width="1.7" fill="none"/>
<path d="M713.1 671.5 Q712.8 682.6 712.8 693.5" stroke="#34343a" stroke-width="7.0" fill="none"/>
<path d="M712.1 672.0 Q711.8 682.6 711.8 693.0" stroke="#ececf1" stroke-width="5.6" fill="none"/>
<path d="M731.8 672.3 Q730.5 683.4 730.3 694.0" stroke="#34343a" stroke-width="6.9" fill="none"/>
<path d="M733.1 672.8 Q731.8 683.4 731.6 693.5" stroke="#ececf1" stroke-width="5.5" fill="none"/>
<path d="M752.2 673.8 Q749.9 684.9 749.6 695.0" stroke="#34343a" stroke-width="6.7" fill="none"/>
<path d="M753.5 674.3 Q751.2 684.9 750.9 694.5" stroke="#ececf1" stroke-width="5.3" fill="none"/>
<path d="M772.9 676.2 Q769.7 687.0 769.3 696.6" stroke="#303036" stroke-width="6.3" fill="none"/>
<path d="M773.8 676.7 Q770.6 687.0 770.2 696.1" stroke="#d8d8de" stroke-width="1.9" fill="none"/>
<path d="M791.0 679.3 Q787.0 689.8 786.5 698.6" stroke="#303036" stroke-width="5.9" fill="none"/>
<path d="M791.9 679.8 Q787.9 689.8 787.4 698.1" stroke="#d8d8de" stroke-width="1.8" fill="none"/>
<path d="M807.5 683.1 Q802.6 693.1 802.1 701.2" stroke="#303036" stroke-width="5.5" fill="none"/>
<path d="M808.4 683.6 Q803.5 693.1 803.0 700.7" stroke="#d8d8de" stroke-width="1.6" fill="none"/>
<path d="M822.0 687.6 Q816.4 697.0 815.8 704.1" stroke="#303036" stroke-width="5.0" fill="none"/>
<path d="M822.9 688.1 Q817.3 697.0 816.7 703.6" stroke="#8c8c96" stroke-width="1.4" fill="none"/>
<path d="M834.2 692.6 Q828.0 701.3 827.4 707.4" stroke="#303036" stroke-width="4.4" fill="none"/>
<path d="M835.1 693.1 Q828.9 701.3 828.3 706.9" stroke="#8c8c96" stroke-width="1.2" fill="none"/>
<path d="M843.9 698.0 Q837.3 705.9 836.5 711.0" stroke="#303036" stroke-width="3.8" fill="none"/>
<path d="M844.8 698.5 Q838.2 705.9 837.4 710.5" stroke="#8c8c96" stroke-width="1.0" fill="none"/>
<path d="M850.9 703.8 Q843.9 710.8 843.2 714.8" stroke="#303036" stroke-width="3.1" fill="none"/>
<path d="M851.8 704.3 Q844.8 710.8 844.1 714.3" stroke="#8c8c96" stroke-width="0.8" fill="none"/>
<path d="M551 690 A154.500 49 0 0 1 860 690 L860 697 A154.500 49 0 0 0 551 697 Z" fill="#c9c8d4" opacity="0.0"/>
<path d="M690 640 L719 690 L724 700 L727 700 L840 655 L840 640 Z" fill="none"/>
<path d="M681 626 L724 700 L719.500 690 L717.500 626 Z" fill="#4a5f5b"/>
<path d="M717.300 626 L726.300 626 L727 700 L724 700 L719 690 Z" fill="#5b6873"/>
<path d="M726 626 L839.500 626 L840 655 L726.800 700 Z" fill="url(#gPcb2)"/>
<path d="M839.500 626 L849 626 L849.500 650 L840 655 Z" fill="#6e927e"/>
<path d="M668.500 612 L681 626 L724 700 L716 690 Z" fill="#8fa39a" opacity="0.7"/>
<path d="M681 626 L724 700 L840 655" stroke="#2f4a40" stroke-width="0.800" fill="none"/>
<ellipse cx="698" cy="380.500" rx="149" ry="41.500" fill="#6f8a7b"/>
<ellipse cx="698" cy="379" rx="149" ry="41" fill="#4e5d56" stroke="#2f3f38" stroke-width="0.700"/>
<path d="M560.500 360 L560.500 374.200 A137 40.500 0 0 0 834.500 374.200 L834.500 355 Z" fill="url(#gTeeth)"/>
<g stroke="#33333d" stroke-width="0.900" fill="none">
<path d="M561.9 362.3 L560.1 378.4"/>
<path d="M563.9 363.3 L562.1 382.3"/>
<path d="M567.2 364.9 L565.5 386.2"/>
<path d="M571.8 366.8 L570.1 389.9"/>
<path d="M577.6 368.9 L575.9 393.5"/>
<path d="M584.5 371.2 L582.9 396.8"/>
<path d="M592.5 373.4 L590.9 400.0"/>
<path d="M601.6 375.6 L600.0 402.9"/>
<path d="M611.5 377.7 L610.0 405.6"/>
<path d="M622.3 379.5 L620.8 407.9"/>
<path d="M633.8 381.1 L632.4 410.0"/>
<path d="M645.9 382.5 L644.6 411.6"/>
<path d="M658.5 383.6 L657.3 413.0"/>
<path d="M671.5 384.4 L670.3 413.9"/>
<path d="M684.7 384.8 L683.7 414.5"/>
<path d="M698.1 385.0 L697.1 414.7"/>
<path d="M711.5 384.8 L710.5 414.5"/>
<path d="M724.7 384.3 L723.9 413.9"/>
<path d="M737.7 383.5 L736.9 413.0"/>
<path d="M750.3 382.4 L749.6 411.6"/>
<path d="M762.4 381.0 L761.8 410.0"/>
<path d="M773.9 379.3 L773.4 407.9"/>
<path d="M784.7 377.5 L784.2 405.6"/>
<path d="M794.6 375.4 L794.2 402.9"/>
<path d="M803.7 373.2 L803.3 400.0"/>
<path d="M811.7 370.9 L811.3 396.8"/>
<path d="M818.6 368.6 L818.3 393.5"/>
<path d="M824.4 366.4 L824.1 389.9"/>
<path d="M829.0 364.4 L828.7 386.2"/>
<path d="M832.3 362.8 L832.1 382.3"/>
<path d="M834.3 361.8 L834.1 378.4"/>
<path d="M560.500 374.200 A137 40.500 0 0 0 834.500 374.200"/>
</g>
<clipPath id="cpk"><path d="M543 321 C543 282 602 261 697 261 C792 261 851 282 851 321 L851.500 342 A154 43 0 0 1 543 347 Z"/></clipPath>
<path d="M543 321 C543 282 602 261 697 261 C792 261 851 282 851 321 L851.500 342 A154 43 0 0 1 543 347 Z" fill="url(#gPinkTop)"/>
<g clip-path="url(#cpk)">
<path d="M530 316 A167 30 0 0 0 864 316 L864 400 L530 400 Z" fill="url(#gPinkBand)" filter="url(#bl6)"/>
</g>
<path d="M543 347 A154 43 0 0 0 851.500 342" fill="none" stroke="#3a2e2f" stroke-width="0.800"/>
<clipPath id="chole"><ellipse cx="695.900" cy="297.750" rx="108.700" ry="31.500"/></clipPath>
<ellipse cx="695.900" cy="297.750" rx="108.700" ry="31.500" fill="#9a8082"/>
<g clip-path="url(#chole)">
<ellipse cx="696" cy="304.500" rx="108" ry="31.500" fill="#b39a9b" stroke="#1a1a1a" stroke-width="0.900"/>
<ellipse cx="696" cy="312" rx="107" ry="31" fill="url(#gBeige)" stroke="#1a1a1a" stroke-width="0.900"/>
<ellipse cx="696" cy="314" rx="106" ry="30" fill="none" stroke="#3a352f" stroke-width="0.600"/>
<path d="M651.700 314 A45.300 12.500 0 0 1 742.300 314 L742.300 320 A45.300 12.500 0 0 1 651.700 320 Z" fill="#a0968a" stroke="#1a1a1a" stroke-width="0.900"/>
<ellipse cx="697" cy="314" rx="45.300" ry="12.500" fill="#b9af9f" stroke="#1a1a1a" stroke-width="0.900"/>
<ellipse cx="697" cy="314.500" rx="42.300" ry="11.200" fill="#9b9183" stroke="#1a1a1a" stroke-width="0.900"/>
<ellipse cx="696.500" cy="319.500" rx="35.200" ry="8.200" fill="#b5ab9b" stroke="#1a1a1a" stroke-width="0.900"/>
<ellipse cx="696.600" cy="321.500" rx="31" ry="7" fill="#8f8f8f" stroke="#1a1a1a" stroke-width="0.900"/>
</g>
<ellipse cx="695.900" cy="297.750" rx="108.700" ry="31.500" fill="none" stroke="#111" stroke-width="1"/>
<path d="M543.300 347 L551 700" stroke="#e3e2e8" stroke-width="1.200" fill="none"/>
<path d="M851.700 342 L860 700" stroke="#e3e2e8" stroke-width="1.200" fill="none"/>
<path d="M600 270.700 L800 256.800" stroke="#d8d0d0" stroke-width="0.800" opacity="0.7" fill="none"/>
<g>
<path d="M665 229 V258 M650 245 L680 242" stroke="#0a56b0" stroke-width="2.200" fill="none"/>
<rect x="660.5" y="226.5" width="7" height="7.5" fill="#1278d8"/>
<path d="M660.5 226.5 l2 -1.500 h7 l-2 1.500 Z" fill="#4a9be8"/>
<path d="M667.5 226.5 l2 -1.500 v7.5 l-2 1.500 Z" fill="#0a4f9e"/>
<rect x="646.5" y="241.5" width="7" height="7.5" fill="#1278d8"/>
<path d="M646.5 241.5 l2 -1.500 h7 l-2 1.500 Z" fill="#4a9be8"/>
<path d="M653.5 241.5 l2 -1.500 v7.5 l-2 1.500 Z" fill="#0a4f9e"/>
<rect x="675.5" y="239" width="7" height="7.5" fill="#1278d8"/>
<path d="M675.5 239 l2 -1.500 h7 l-2 1.500 Z" fill="#4a9be8"/>
<path d="M682.5 239 l2 -1.500 v7.5 l-2 1.500 Z" fill="#0a4f9e"/>
<rect x="661.5" y="254.5" width="7" height="8" fill="#1278d8"/>
<path d="M661.5 254.5 l2 -1.500 h7 l-2 1.500 Z" fill="#4a9be8"/>
<path d="M668.5 254.5 l2 -1.500 v8 l-2 1.500 Z" fill="#0a4f9e"/>
<rect x="659" y="235.5" width="7" height="8" fill="#1278d8"/>
<path d="M659 235.5 l2 -1.500 h7 l-2 1.500 Z" fill="#4a9be8"/>
<path d="M666 235.5 l2 -1.500 v8 l-2 1.500 Z" fill="#0a4f9e"/>
<rect x="664" y="242.5" width="7" height="8.5" fill="#1278d8"/>
<path d="M664 242.5 l2 -1.500 h7 l-2 1.500 Z" fill="#4a9be8"/>
<path d="M671 242.5 l2 -1.500 v8.5 l-2 1.500 Z" fill="#0a4f9e"/>
<path d="M664 240 L669 250" stroke="#06356e" stroke-width="1.200"/>
</g>
<g font-family="Liberation Serif,serif" font-size="12.500" fill="#333" letter-spacing="0">
<text transform="translate(661.300,219.700) scale(0.800,1)">Y</text><text transform="translate(689.800,244.800) scale(0.800,1)">X</text><text transform="translate(670.500,260) scale(0.800,1)">Z</text>
</g>
<path d="M428.200 713.500 L428.800 741.800 L458 739 M428.800 741.800 L435 750.500" stroke="#222" stroke-width="1.100" fill="none"/>
<path d="M428.800 742 L430.400 784" stroke="#c4c4c4" stroke-width="1" fill="none"/>
<g font-family="Liberation Serif,serif" font-size="13" fill="#222" letter-spacing="0">
<text x="425.500" y="708">Y</text><text x="465" y="744">X</text><text x="437" y="762.500">Z</text><text x="427.500" y="798.500" fill="#c0c0c0">G</text>
</g>
<g fill="#fafafa" stroke="#c8c8c8" stroke-width="0.900">
<path d="M1168 222 L1207 219 L1213.600 230 L1175.700 232 Z" stroke-dasharray="3 2"/>
<path d="M1168 222 L1175.700 232 L1175.700 268.700 L1169 258 Z" stroke-dasharray="3 2"/>
<path d="M1175.300 232.300 L1213.600 230 L1213.600 267.300 L1175.300 269 Z" fill="#f7f7f7"/>
</g>
<text x="1187.300" y="257" font-family="Liberation Sans,sans-serif" font-size="20" fill="#111" letter-spacing="0">F</text>
<path d="M1185.500 227.500 L1190.500 223.700 L1196 226.700 M1187.500 226.500 L1194.500 226.200" stroke="#222" stroke-width="1.100" fill="none"/><path d="M1171.500 238 V246 M1172 250 V252" stroke="#444" stroke-width="1" fill="none"/>
<g fill="#fff" stroke="#c6c6c6" stroke-width="1">
<path d="M1191.2 293.5 l10.500 11 h-6 v9.500 h-9 v-9.500 h-6 Z"/>
<path d="M1191.2 352.5 l10.500 -11 h-6 v-9.500 h-9 v9.500 h-6 Z"/>
<path d="M1161.7 323 l11 -10.500 v6 h9.500 v9 h-9.500 v6 Z"/>
<path d="M1220.7 323 l-11 -10.500 v6 h-9.500 v9 h9.500 v6 Z"/>
<rect x="1181.7" y="313.5" width="19" height="19" rx="4"/>
</g>
<rect x="1189.2" y="321" width="4" height="4" fill="#b0b0b0"/>
<g fill="#fff" stroke="#c6c6c6" stroke-width="1">
<rect x="1189.500" y="381" width="3.500" height="138"/>
<rect x="1181.500" y="363" width="19.500" height="18.500" rx="3"/>
<rect x="1181.500" y="518.500" width="19.500" height="18.500" rx="3"/>
<rect x="1182" y="496.500" width="18.500" height="10" rx="3"/>
</g>
<path d="M1185.500 372.300 H1197 M1191.250 366.500 V378 M1185.500 527.800 H1197" stroke="#b4b4b4" stroke-width="1.500" fill="none"/>
</g></svg>

<!-- right splitter + property sheet -->
<div class="box" style="left:1242px;top:171px;width:4px;height:638px;background:#d3d4da"></div>
<div class="t" style="left:1250px;top:175px">Sensor Property Sheet</div>
<svg class="a" style="left:1552px;top:175px" width="30" height="12" viewBox="0 0 30 12"><g fill="none" stroke="#222" stroke-width="1.300"><rect x="1.600" y="4.600" width="5.800" height="4.800"/><path d="M3.600 4.600 V2.600 H9.400 V7.400 H7.400"/><path d="M3.600 3.300 H9.400 M1.600 5.300 H7.400" stroke-width="1.600"/><path d="M17.500 2 L25 9.500 M25 2 L17.500 9.500" stroke-width="1.600"/></g></svg>
<div class="box" style="left:1341px;top:193px;width:74px;height:22px;border:1px solid #4f86c6;background:#6fa3dc"></div>
<div class="box" style="left:1414px;top:193px;width:74px;height:22px;border:1px solid #a8a8a8;background:#f4f4f6"></div>
<div class="t" style="left:1348px;top:197px">Properties</div>
<div class="t" style="left:1430px;top:197px">Results</div>
<!-- scrollbar -->
<div class="box" style="left:1565px;top:215px;width:17px;height:594px;border:1px solid #c4c4c8;background:#e6e6ea"></div>
<div class="box" style="left:1565px;top:215px;width:17px;height:17px;border:1px solid #b8b8bc;background:#f2f2f4"></div>
<div class="box" style="left:1565px;top:232px;width:17px;height:560px;border:1px solid #c4c4c8;background:#f7f7f9"></div>
<div class="box" style="left:1565px;top:792px;width:17px;height:17px;border:1px solid #b8b8bc;background:#f2f2f4"></div>
<svg class="a" style="left:1569px;top:221px" width="9" height="6" viewBox="0 0 9 6"><path d="M0.500 5 H8.500 L4.500 1 Z" fill="#8a8a8a"/></svg>
<svg class="a" style="left:1569px;top:798px" width="9" height="6" viewBox="0 0 9 6"><path d="M0.500 1 H8.500 L4.500 5 Z" fill="#8a8a8a"/></svg>
<!-- sections -->
<div class="box" style="left:1251px;top:230px;width:7px;height:1px;background:#8aaddb"></div>
<svg class="a" style="left:1262px;top:225px" width="6" height="9" viewBox="0 0 6 9"><path d="M0.500 0.500 V8.500 L5 4.500 Z" fill="#111"/></svg>
<div class="t" style="left:1271.500px;top:222px">Identification</div>
<div class="box" style="left:1364px;top:230px;width:197px;height:1px;background:#8aaddb"></div>

<div class="box" style="left:1251px;top:249.5px;width:7px;height:1px;background:#8aaddb"></div>
<svg class="a" style="left:1260px;top:246px" width="9" height="6" viewBox="0 0 9 6"><path d="M0.500 0.500 H8 L4.250 5 Z" fill="#111"/></svg>
<div class="t" style="left:1271.500px;top:241.500px">Placement</div>
<div class="box" style="left:1335px;top:249.5px;width:226px;height:1px;background:#8aaddb"></div>

<div class="t" style="left:1325.700px;top:266px">X Location</div>
<div class="t" style="left:1325.700px;top:290.500px">Y Location</div>
<div class="t" style="left:1325.700px;top:315px">Z Location</div>
<div class="box" style="left:1396px;top:263px;width:95px;height:20px;border:1px solid #979797;background:#fff"></div>
<div class="box" style="left:1396px;top:288px;width:95px;height:20px;border:1px solid #979797;background:#fff"></div>
<div class="box" style="left:1396px;top:312px;width:95px;height:20px;border:1px solid #979797;background:#fff"></div>
<div class="t sans" style="left:1398.500px;top:266.500px;font-size:10.500px;letter-spacing:0.650px">106.5</div>
<div class="t sans" style="left:1398.500px;top:291px;font-size:10.500px;letter-spacing:0.650px">324.5</div>
<div class="t sans" style="left:1398.500px;top:315.500px;font-size:10.500px;letter-spacing:0.650px">65.5</div>
<div class="box" style="left:1494px;top:263px;width:38px;height:20px;border:1px solid #a6a6a6;background:#f7f7f7"></div>
<div class="box" style="left:1494px;top:288px;width:38px;height:20px;border:1px solid #a6a6a6;background:#f7f7f7"></div>
<div class="box" style="left:1494px;top:312px;width:38px;height:20px;border:1px solid #a6a6a6;background:#f7f7f7"></div>
<div class="t" style="left:1497px;top:265.500px;font-size:11px">mm</div>
<div class="t" style="left:1497px;top:290px;font-size:11px">mm</div>
<div class="t" style="left:1497px;top:314.500px;font-size:11px">mm</div>
<svg class="a" style="left:1517px;top:270px" width="9" height="6" viewBox="0 0 9 6"><path d="M0.500 0.500 H8 L4.250 5 Z" fill="#111"/></svg>
<svg class="a" style="left:1517px;top:295px" width="9" height="6" viewBox="0 0 9 6"><path d="M0.500 0.500 H8 L4.250 5 Z" fill="#111"/></svg>
<svg class="a" style="left:1517px;top:319px" width="9" height="6" viewBox="0 0 9 6"><path d="M0.500 0.500 H8 L4.250 5 Z" fill="#111"/></svg>
<div class="box" style="left:1535px;top:263px;width:20px;height:20px;border:1px solid #a6a6a6;background:#f7f7f7"></div>
<div class="box" style="left:1535px;top:288px;width:20px;height:20px;border:1px solid #a6a6a6;background:#f7f7f7"></div>
<div class="box" style="left:1535px;top:312px;width:20px;height:20px;border:1px solid #a6a6a6;background:#f7f7f7"></div>
<svg class="a" style="left:1535px;top:263px" width="20" height="70" viewBox="0 0 20 70"><g fill="none" stroke="#222" stroke-width="1.100"><path d="M4 8 H16"/><path d="M16 12 H4"/><path d="M16.300 8.300 L11.500 4.200 L12.800 8.300 Z M3.700 11.700 L8.500 15.800 L7.200 11.700 Z" fill="#222" stroke-width="0.600"/></g><g transform="translate(0,25)"><g fill="none" stroke="#222" stroke-width="1.100"><path d="M4 8 H16"/><path d="M16 12 H4"/><path d="M16.300 8.300 L11.500 4.200 L12.800 8.300 Z M3.700 11.700 L8.500 15.800 L7.200 11.700 Z" fill="#222" stroke-width="0.600"/></g></g><g transform="translate(0,49)"><g fill="none" stroke="#222" stroke-width="1.100"><path d="M4 8 H16"/><path d="M16 12 H4"/><path d="M16.300 8.300 L11.500 4.200 L12.800 8.300 Z M3.700 11.700 L8.500 15.800 L7.200 11.700 Z" fill="#222" stroke-width="0.600"/></g></g></svg>

<div class="box" style="left:1251px;top:348px;width:7px;height:1px;background:#8aaddb"></div>
<svg class="a" style="left:1262px;top:343px" width="6" height="9" viewBox="0 0 6 9"><path d="M0.500 0.500 V8.500 L5 4.500 Z" fill="#111"/></svg>
<div class="t" style="left:1271.500px;top:340px">Construction</div>
<div class="box" style="left:1352px;top:348px;width:209px;height:1px;background:#8aaddb"></div>

<div class="box" style="left:1251px;top:367px;width:7px;height:1px;background:#8aaddb"></div>
<svg class="a" style="left:1260px;top:364px" width="9" height="6" viewBox="0 0 9 6"><path d="M0.500 0.500 H8 L4.250 5 Z" fill="#111"/></svg>
<div class="t" style="left:1271.500px;top:359.500px">Controls</div>
<div class="box" style="left:1329px;top:367px;width:232px;height:1px;background:#8aaddb"></div>

<div class="t" style="left:1273.500px;top:380px">Differential Sensor</div>
<div class="box" style="left:1396px;top:381px;width:13px;height:13px;border:1px solid #b0b0b0;background:#fff"></div>
<div class="t" style="left:1284.500px;top:402px">Measured Variable</div>
<div class="box" style="left:1396px;top:399px;width:159px;height:20px;border:1px solid #a6a6a6;background:#f7f7f7"></div>
<div class="t" style="left:1399px;top:402px">Velocity</div>
<svg class="a" style="left:1539px;top:406px" width="9" height="6" viewBox="0 0 9 6"><path d="M0.500 0.500 H8 L4.250 5 Z" fill="#111"/></svg>
<svg class="a" style="left:1262px;top:429px" width="6" height="9" viewBox="0 0 6 9"><path d="M0.500 0.500 V8.500 L5 4.500 Z" fill="#111"/></svg>
<div class="t" style="left:1271.500px;top:426px">Display Options</div>

<!-- badges -->
<div class="box" style="left:1267px;top:272.500px;width:32px;height:32px;border-radius:16px;background:#fff;box-shadow:0 0 2px rgba(0,0,0,0.250)"></div>
<div class="box" style="left:1270.500px;top:276px;width:25.500px;height:25.500px;border-radius:13px;background:#0a14ea"></div>
<div class="t sans c" style="left:1270.500px;top:279.500px;width:25.500px;font-size:18px;font-weight:bold;color:#fff;height:18px;line-height:18px">1</div>
<div class="box" style="left:1459px;top:393.500px;width:32px;height:32px;border-radius:16px;background:#fff;box-shadow:0 0 2px rgba(0,0,0,0.250)"></div>
<div class="box" style="left:1462.500px;top:397px;width:25.500px;height:25.500px;border-radius:13px;background:#0a14ea"></div>
<div class="t sans c" style="left:1462.500px;top:400.500px;width:25.500px;font-size:18px;font-weight:bold;color:#fff;height:18px;line-height:18px">2</div>

<!-- AI popup -->
<div class="box" style="left:1425px;top:443px;width:164px;height:46px;border:1.5px solid #c2c2c2;border-radius:5px;background:#fff;box-shadow:0 0 2px rgba(0,0,0,0.100)"></div>
<svg class="a" style="left:1434px;top:451px" width="30" height="30" viewBox="0 0 30 30">
 <g fill="none" stroke="#222" stroke-width="2" stroke-linecap="round" stroke-linejoin="round"><path d="M2 8 V4 Q2 2 4 2 H7.500"/><path d="M22 2 H26 Q28 2 28 4 V8"/><path d="M28 22 V26 Q28 28 26 28 H22"/><path d="M7.500 28 H4 Q2 28 2 26 V22"/></g>
 <path d="M15.500 6.500 Q16.800 13.200 23.500 14.500 Q16.800 15.800 15.500 22.500 Q14.200 15.800 7.500 14.500 Q14.200 13.200 15.500 6.500 Z" fill="none" stroke="#5b2be0" stroke-width="1.900" stroke-linejoin="round"/>
</svg>
<div class="t sans" style="left:1473.5px;top:452.5px;font-size:24px;height:30px;line-height:30px;color:#111;letter-spacing:0">AI识图</div>
<svg class="a" style="left:1561px;top:461px" width="16" height="12" viewBox="0 0 16 12"><path d="M3 3.500 L8 8.500 L13 3.500" fill="none" stroke="#222" stroke-width="2.700"/></svg>

<!-- bottom tabs -->
<div class="box" style="left:1242px;top:809px;width:340px;height:1px;background:#c0c0c0"></div>
<div class="box" style="left:1242px;top:809px;width:98px;height:20px;border:1px solid #b4b4b8;border-bottom:none;background:#d4d5d9"></div>
<div class="box" style="left:1340px;top:809px;width:146px;height:20px;border-right:1px solid #b4b4b8;background:#fff"></div>
<div class="t" style="left:1257px;top:810px">Object Panel</div>
<div class="t" style="left:1351px;top:811px">Sensor Property Sheet</div>

<div class="box" style="left:15px;top:828.5px;width:1567px;height:26.5px;background:#2b579a"></div>
<div class="t sans" style="left:17px;top:835px;font-size:12.6px;color:#fff;height:16px;line-height:16px;letter-spacing:0">Selected 1 Objects&nbsp; Full Converged</div>

</div>
</body></html>
